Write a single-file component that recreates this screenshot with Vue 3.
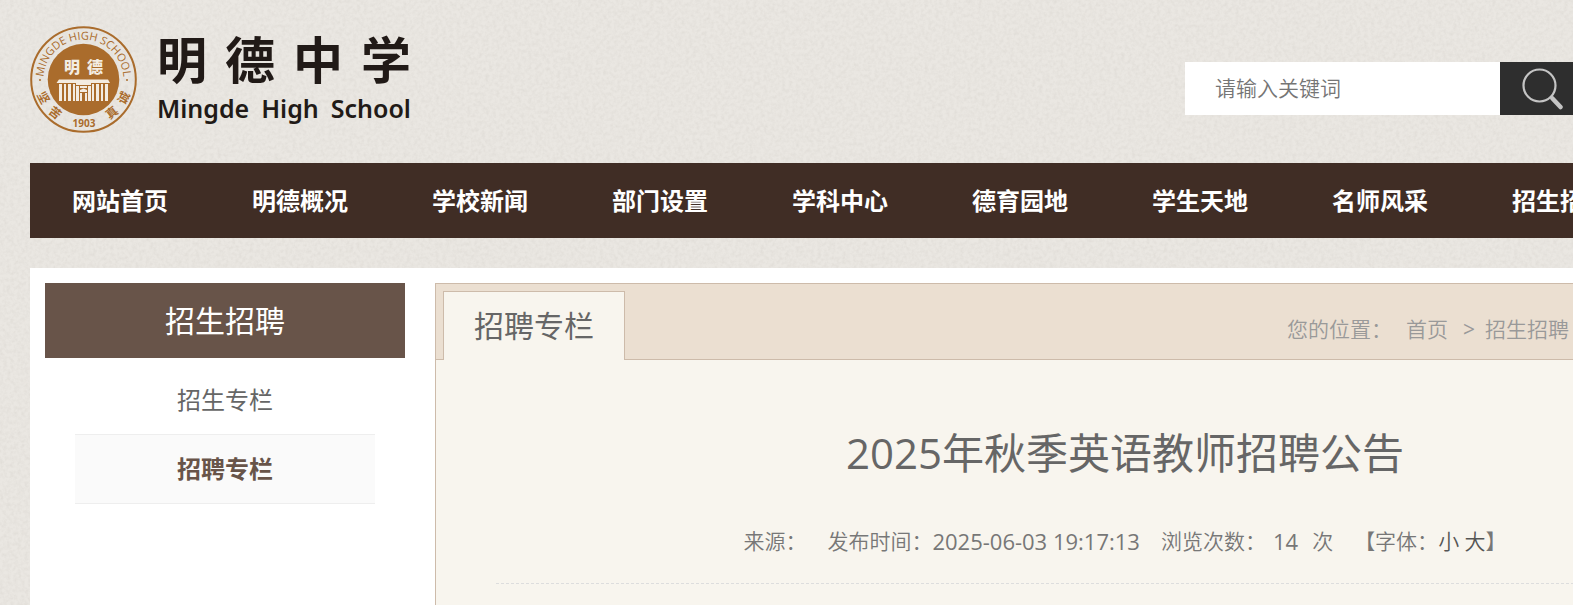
<script setup>
const navItems = [
  '网站首页', '明德概况', '学校新闻', '部门设置', '学科中心',
  '德育园地', '学生天地', '名师风采', '招生招聘',
]
const sideItems = [
  { label: '招生专栏', active: false },
  { label: '招聘专栏', active: true },
]
</script>

<template>
  <div class="page">
    <svg class="paper" aria-hidden="true">
      <filter id="grain" x="0" y="0" width="100%" height="100%">
        <feTurbulence type="fractalNoise" baseFrequency="0.28" numOctaves="3" seed="4" />
        <feColorMatrix values="0 0 0 0 0.5  0 0 0 0 0.47  0 0 0 0 0.43  0.32 0.14 0 0 -0.18" />
      </filter>
      <rect width="100%" height="100%" filter="url(#grain)" />
    </svg>

    <div class="container">
      <header class="top">
        <a class="brand" href="#" aria-label="明德中学 Mingde High School">
          <svg class="emblem" viewBox="0 0 107 107" aria-hidden="true">
            <defs>
              <path id="arc-top" d="M13.5 53.5a40 40 0 0 1 80 0" />
            </defs>
            <circle cx="53.5" cy="53.5" r="52.3" fill="none" stroke="#aa6c2c" stroke-width="2" />
            <circle cx="53.5" cy="53.5" r="35.8" fill="#aa6c2c" />
            <g class="ring">
              <text class="ring-en" text-anchor="middle"><textPath href="#arc-top" startOffset="50%">MINGDE HIGH SCHOOL</textPath></text>
              <text class="ring-year" x="54" y="101" text-anchor="middle">1903</text>
              <text class="ring-cn" text-anchor="middle" transform="translate(13 72) rotate(62)" y="4">坚</text>
              <text class="ring-cn" text-anchor="middle" transform="translate(25 87) rotate(38)" y="4">苦</text>
              <text class="ring-cn" text-anchor="middle" transform="translate(82 87) rotate(-38)" y="4">真</text>
              <text class="ring-cn" text-anchor="middle" transform="translate(94 72) rotate(-62)" y="4">诚</text>
              <circle cx="10" cy="54" r="1" />
              <circle cx="97" cy="54" r="1" />
            </g>
            <g fill="#f3ece2">
              <text class="seal" x="42" y="47" text-anchor="middle">明</text>
              <text class="seal" x="65" y="47" text-anchor="middle">德</text>
              <path d="M29 53.5h49l2 3.5H26.500z" />
              <path d="M29 58h3v17h-3zM34 58h2v17h-2zM38 58h3v17h-3zM43 58h2v17h-2zM62 58h2v17h-2zM66 58h3v17h-3zM71 58h2v17h-2zM75 58h3v17h-3z" />
              <path d="M46 57h15v2H46zM46 60h3v15h-3zM58 60h3v15h-3zM50 60h7v2h-7zM50 64l3.500-1.500 3.500 1.500v2h-7zM50 67h2v8h-2zM55 67h2v8h-2z" />
            </g>
          </svg>
          <span class="brand-text">
            <span class="brand-cn"><span>明</span><span>德</span><span>中</span><span>学</span></span>
            <span class="brand-en"><span>Mingde</span><span>High</span><span>School</span></span>
          </span>
        </a>
        <form class="search" @submit.prevent>
          <input type="text" placeholder="请输入关键词" aria-label="请输入关键词" />
          <button type="submit" aria-label="搜索">
            <svg viewBox="0 0 42 42" fill="none" stroke="#c4c4c4" aria-hidden="true">
              <circle cx="17.500" cy="17.500" r="16" stroke-width="2.200" />
              <path d="M28.500 28.500l3 3" stroke-width="2.500" />
              <path d="M30.500 30.500l8 8.500" stroke-width="4.500" stroke-linecap="round" />
            </svg>
          </button>
        </form>
      </header>

      <nav class="menu">
        <a v-for="item in navItems" :key="item" href="#">{{ item }}</a>
      </nav>

      <main class="body">
        <aside class="side">
          <h2>招生招聘</h2>
          <ul>
            <li v-for="item in sideItems" :key="item.label">
              <a href="#" :class="{ active: item.active }">{{ item.label }}</a>
            </li>
          </ul>
        </aside>

        <section class="panel">
          <div class="panel-head">
            <h3>招聘专栏</h3>
            <div class="crumbs">
              <span>您的位置：</span>
              <a class="home" href="#">首页</a>
              <span class="sep">&gt;</span>
              <a href="#">招生招聘</a>
            </div>
          </div>
          <article>
            <h1>2025年秋季英语教师招聘公告</h1>
            <div class="meta">
              <span>来源：</span>
              <span class="pair">发布时间：<time>2025-06-03 19:17:13</time></span>
              <span class="views"><span>浏览次数：</span><span class="count">14</span></span>
              <span>次</span>
              <span>【字体：<a href="#">小</a> <a href="#">大</a>】</span>
            </div>
          </article>
        </section>
      </main>
    </div>
  </div>
</template>

<style>
body {
  margin: 0;
  background: #eae7e2;
}
</style>

<style scoped>
.page {
  position: relative;
  min-height: 100vh;
  overflow: hidden;
  box-sizing: border-box;
  display: flex;
  padding: 0 30px;
  background: #eae7e2;
  font-family: "Open Sans", "Noto Sans CJK SC", sans-serif;
  color: #666;
}
.paper {
  position: absolute;
  inset: 0;
  width: 100%;
  height: 100%;
}
a {
  color: inherit;
  text-decoration: none;
}
h1, h2, h3, ul {
  margin: 0;
  padding: 0;
  font-weight: 400;
  list-style: none;
}
.container {
  position: relative;
  flex: 1 0 auto;
  min-width: 1800px;
  display: flex;
  flex-direction: column;
}
.top {
  display: flex;
  align-items: flex-start;
  height: 163px;
}
.brand {
  display: flex;
  gap: 20px;
  padding-top: 26px;
  color: #211a17;
}
.emblem {
  width: 107px;
  height: 107px;
}
.ring {
  fill: #aa6c2c;
}
.ring-en {
  font: 500 11px "Open Sans", sans-serif;
}
.ring-year {
  font: 700 10px "Noto Sans", sans-serif;
}
.ring-cn {
  font: 700 12px "Noto Sans CJK SC", sans-serif;
}
.seal {
  font: 900 16px "Noto Sans CJK SC", sans-serif;
}
.brand-text {
  display: flex;
  flex-direction: column;
}
.brand-cn {
  display: flex;
  justify-content: space-between;
  font: 700 50px/62px "Noto Sans CJK SC", sans-serif;
}
.brand-en {
  display: flex;
  gap: 12px;
  font: 600 25px/40px "Noto Sans", sans-serif;
}
.search {
  display: flex;
  height: 53px;
  margin: 62px 0 0 auto;
  padding-right: 250px;
}
.search input {
  box-sizing: border-box;
  width: 315px;
  padding: 0 30px 4px;
  border: 0;
  background: #fff;
  font: 350 21px "Noto Sans CJK SC", sans-serif;
}
.search input::placeholder {
  color: #757575;
  opacity: 1;
}
.search button {
  display: flex;
  align-items: center;
  width: 80px;
  padding: 0 0 0 22px;
  border: 0;
  background: #2e2e2e;
}
.search svg {
  width: 42px;
  height: 42px;
}
.menu {
  display: flex;
  height: 75px;
  background: #402d25;
}
.menu a {
  width: 10%;
  color: #fff;
  font-size: 24px;
  font-weight: 700;
  line-height: 76px;
  text-align: center;
}
.body {
  flex: 1;
  display: flex;
  gap: 30px;
  margin-top: 30px;
  padding: 15px 15px 0;
  background: #fff;
}
.side {
  width: 360px;
}
.side h2 {
  background: #685449;
  color: #fff;
  font-size: 30px;
  line-height: 75px;
  text-align: center;
}
.side ul {
  padding: 8px 30px 0;
}
.side li a {
  display: block;
  font-size: 24px;
  line-height: 68px;
  text-align: center;
}
.side li a.active {
  border: solid #eee;
  border-width: 1px 0;
  background: #fafafa;
  color: #685449;
  font-weight: 700;
}
.panel {
  flex: 1;
  border: 1px solid #cdbbaa;
  border-bottom: 0;
  background: #f8f5ee;
}
.panel-head {
  display: flex;
  align-items: flex-end;
  height: 75px;
  padding-left: 7px;
  border-bottom: 1px solid #cdbbaa;
  background: #ebdfd1;
}
.panel-head h3 {
  margin-bottom: -1px;
  padding: 0 30px;
  border: 1px solid #cdbbaa;
  border-bottom: 0;
  background: #f8f5ee;
  font-size: 30px;
  line-height: 68px;
}
.crumbs {
  display: flex;
  margin-left: auto;
  padding-right: 245px;
  color: #999;
  font-size: 21px;
  font-weight: 350;
  line-height: 60px;
}
.home {
  padding: 0 15px 0 14px;
}
.sep {
  padding-right: 10px;
  font-weight: 400;
}
article {
  padding: 60px 60px 0;
}
h1 {
  font-size: 42px;
  line-height: 66px;
  text-align: center;
}
.meta {
  display: flex;
  justify-content: center;
  gap: 21px;
  padding: 25px 0 11px;
  border-bottom: 1px dashed #ddd;
  color: #777;
  font-size: 21px;
  font-weight: 350;
  line-height: 61px;
}
.pair {
  display: flex;
}
time,
.count {
  font-size: 22px;
  font-weight: 400;
}
.views {
  display: flex;
  gap: 7px;
  margin-right: -7px;
}
.meta a {
  color: #555;
}
</style>
